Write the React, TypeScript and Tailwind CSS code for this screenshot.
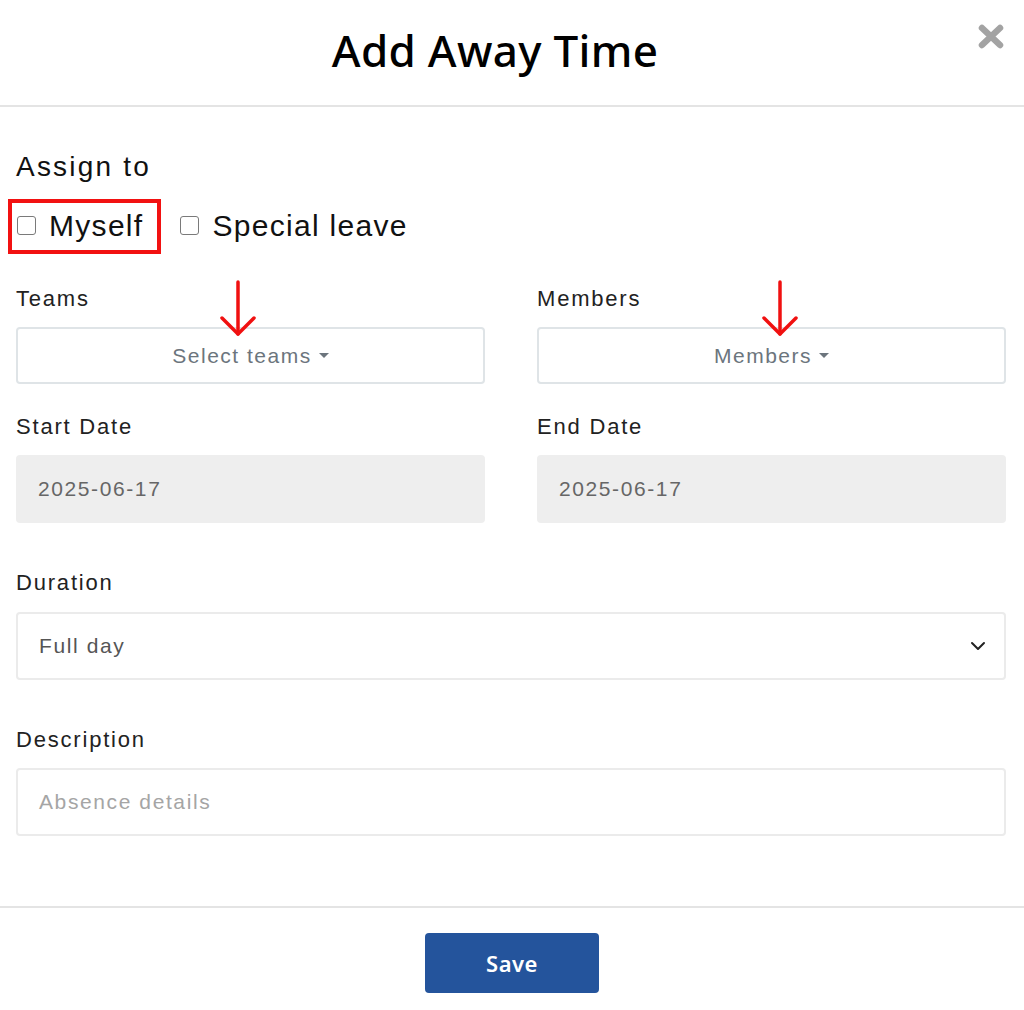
import React from 'react'

function Field({ label, children }: { label: string; children: React.ReactNode }) {
  return (
    <div>
      <div className="text-[22px] leading-[24px] tracking-[1.8px] text-[#222]">{label}</div>
      {children}
    </div>
  )
}

function Caret() {
  return <span className="inline-block ml-[7px] align-middle border-x-[5px] border-x-transparent border-t-[5px] border-t-[#6c757d]" />
}

function Box({ label }: { label: string }) {
  return (
    <label className="flex items-center gap-[13px]">
      <span className="w-[19px] h-[19px] rounded-[3px] border-[1.5px] border-[#7a7a7a] bg-white" />
      <span>{label}</span>
    </label>
  )
}

function RedArrow({ className }: { className: string }) {
  return (
    <svg className={className} width="40" height="58" viewBox="0 0 40 58" fill="none">
      <path d="M20 2 L20 54" stroke="#f01010" strokeWidth="3.5" strokeLinecap="round" />
      <path d="M4 38 L20 54 L36 38" stroke="#f01010" strokeWidth="3.5" strokeLinecap="round" strokeLinejoin="round" />
    </svg>
  )
}

export default function App() {
  return (
    <div className="w-[1024px] h-[1010px] bg-white font-['Liberation_Sans',Arial,sans-serif] text-[#111] overflow-hidden">
      {/* header */}
      <div className="relative h-[107px] flex items-center justify-center pr-[34px] border-b-2 border-[#e4e4e4]">
        <h1 className="-mt-[6px] text-[44px] font-medium tracking-[0.3px] text-black font-['Noto_Sans',sans-serif]">
          Add Away Time
        </h1>
        <svg className="absolute right-[20px] top-[24px]" width="26" height="25" viewBox="0 0 26 25">
          <path d="M4 4 L22 21 M22 4 L4 21" stroke="#a3a3a3" strokeWidth="6.5" strokeLinecap="round" />
        </svg>
      </div>

      {/* body */}
      <div className="relative pl-4 pr-[18px] pt-[44px]">
        <div className="text-[28px] leading-[32px] tracking-[2.2px]">Assign to</div>

        <div className="relative mt-[19px] h-[46px] flex items-center gap-[37px] text-[30px] tracking-[1.3px] pl-[1px]">
          <Box label="Myself" />
          <Box label="Special leave" />
          <div className="absolute left-[-8px] top-[-3px] w-[153px] h-[55px] border-4 border-[#f21111]" />
        </div>

        <div className="grid grid-cols-2 gap-x-[52px] mt-[39px]">
          <Field label="Teams">
            <div className="mt-[16px] h-[57px] rounded-[4px] border-2 border-[#dfe4e7] flex items-center justify-center text-[21px] tracking-[1.5px] text-[#6c757d]">
              Select teams
              <Caret />
            </div>
          </Field>
          <Field label="Members">
            <div className="mt-[16px] h-[57px] rounded-[4px] border-2 border-[#dfe4e7] flex items-center justify-center text-[21px] tracking-[1.5px] text-[#6c757d]">
              Members
              <Caret />
            </div>
          </Field>

          <div className="mt-[31px]">
            <Field label="Start Date">
              <div className="mt-[16px] h-[68px] rounded-[4px] bg-[#eeeeee] flex items-center pl-[22px] text-[21px] tracking-[1.6px] text-[#666]">
                2025-06-17
              </div>
            </Field>
          </div>
          <div className="mt-[31px]">
            <Field label="End Date">
              <div className="mt-[16px] h-[68px] rounded-[4px] bg-[#eeeeee] flex items-center pl-[22px] text-[21px] tracking-[1.6px] text-[#666]">
                2025-06-17
              </div>
            </Field>
          </div>
        </div>

        <div className="mt-[48px]">
          <Field label="Duration">
            <div className="mt-[17px] h-[68px] rounded-[4px] border-2 border-[#ebebeb] flex items-center justify-between pl-[21px] pr-[18px] text-[21px] tracking-[1.6px] text-[#555]">
              Full day
              <svg width="16" height="10" viewBox="0 0 16 10" fill="none">
                <path d="M2 2 L8 8 L14 2" stroke="#222" strokeWidth="2" strokeLinecap="round" strokeLinejoin="round" />
              </svg>
            </div>
          </Field>
        </div>

        <div className="mt-[48px]">
          <Field label="Description">
            <div className="mt-[16px] h-[68px] rounded-[4px] border-2 border-[#ebebeb] flex items-center pl-[21px] text-[21px] tracking-[1.6px] text-[#a5a5a5]">
              Absence details
            </div>
          </Field>
        </div>

        <RedArrow className="absolute left-[218px] top-[173px]" />
        <RedArrow className="absolute left-[760px] top-[173px]" />
      </div>

      {/* footer */}
      <div className="mt-[70px] border-t-2 border-[#e4e4e4] flex justify-center pt-[25px]">
        <button className="w-[174px] h-[60px] rounded-[4px] bg-[#24549c] text-white text-[22px] font-semibold tracking-[0.5px] font-['Noto_Sans',sans-serif]">
          Save
        </button>
      </div>
    </div>
  )
}
